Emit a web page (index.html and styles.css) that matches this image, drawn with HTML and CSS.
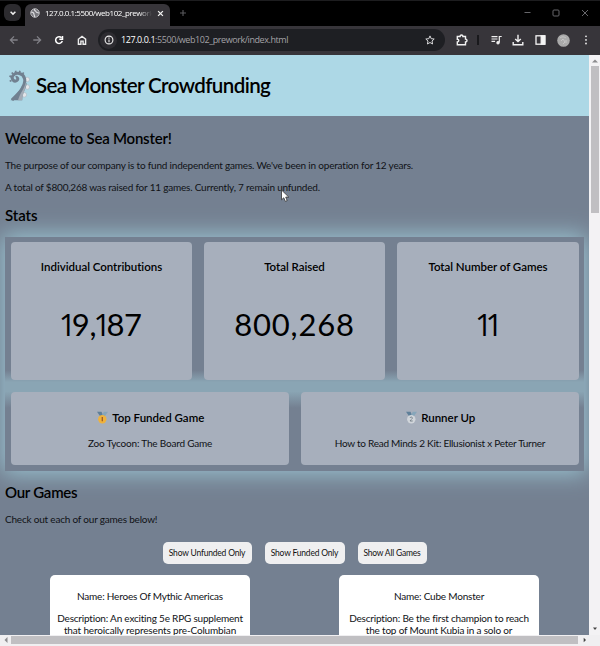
FILE: index.html
```html
<!DOCTYPE html>
<html lang="en">
<head>
<meta charset="utf-8">
<title>Sea Monster Crowdfunding</title>
<link rel="stylesheet" href="styles.css">
</head>
<body>
<div class="browser">
  <div class="tabstrip">
    <div class="tab-search"><svg width="8" height="8" viewBox="0 0 8 8" fill="none" stroke="#eee" stroke-width="1.5"><path d="M1.6 2.7 4 5.1 6.4 2.7"/></svg></div>
    <div class="tab">
      <svg width="10" height="10" viewBox="0 0 10 10"><circle cx="5" cy="5" r="4.3" fill="#77777d" stroke="#b5b5b9"/><path d="M1 4c2 0 3 1 3 2.2S5 8 4.6 9.2M4.3 1c-.3 2 1.2 1.4 1.7 2.6C6.5 5 8 4.5 9 5" fill="none" stroke="#e0e0e3" stroke-width="1.1"/></svg>
      <span class="tab-title">127.0.0.1:5500/web102_prework</span>
      <svg width="7" height="7" viewBox="0 0 7 7" stroke="#f1f1f1" stroke-width="1.3"><path d="m1.1 1.1 4.8 4.8m0-4.8L1.1 5.9"/></svg>
    </div>
    <svg class="new-tab" width="8" height="8" viewBox="0 0 8 8" stroke="#5b5b5f" stroke-width="1.1"><path d="M4 1v6M1 4h6"/></svg>
    <div class="window-buttons">
      <svg width="7" height="8" viewBox="0 0 7 8" fill="none" stroke="#66666a"><path d="M.5 3.500h6"/></svg>
      <svg width="8" height="8" viewBox="0 0 8 8" fill="none" stroke="#66666a"><rect x="1" y="1" width="6" height="6" rx="1"/></svg>
      <svg width="8" height="8" viewBox="0 0 8 8" fill="none" stroke="#66666a"><path d="m1 1 6 6m0-6L1 7"/></svg>
    </div>
  </div>
  <div class="toolbar">
    <div class="nav">
      <svg width="10" height="10" viewBox="0 0 10 10" fill="none" stroke="#818087" stroke-width="1.3"><path d="M8.7 5H1.6M5 1.4 1.4 5 5 8.6"/></svg>
      <svg width="10" height="10" viewBox="0 0 10 10" fill="none" stroke="#818087" stroke-width="1.3"><path d="M1.3 5h7.1M5 1.4 8.6 5 5 8.6"/></svg>
      <svg width="10" height="10" viewBox="0 0 10 10" fill="none" stroke="#fff" stroke-width="1.5"><path d="M8.300 6A3.400 3.400 0 1 1 7.600 2.800"/><path d="M8.500 1v3.200H5.300" /></svg>
      <svg width="10" height="10" viewBox="0 0 10 10" fill="none" stroke="#eee" stroke-width="1.4"><path d="M1.4 4.2 5 1.3l3.6 2.9v5H6.1V6.1H3.9v3.1H1.4z"/></svg>
    </div>
    <div class="address">
      <span class="info"><svg width="10" height="10" viewBox="0 0 10 10" fill="none" stroke="#eee" stroke-width="1.1"><circle cx="5" cy="5" r="3.9"/><path d="M5 4.5v2.8M5 2.6v1.1"/></svg></span>
      <span class="url"><b>127.0.0.1</b>:5500/web102_prework/index.html</span>
      <svg width="10" height="10" viewBox="0 0 10 10" fill="none" stroke="#d7d7d9"><path d="m5 .9 1.2 2.8 3 .3L7 6l.6 3L5 7.5 2.4 9 3 6 .8 4l3-.3z"/></svg>
    </div>
    <svg class="puzzle" width="12" height="12" viewBox="0 0 12 12" fill="none" stroke="#f1f1f1" stroke-width="1.4"><path d="M1.3 2.5h2.8c0-2 2.8-2 2.8 0h2.6v2.6c2 0 2 2.8 0 2.8v2.8H1.3V8c2 0 2-2.8 0-2.8z"/></svg>
    <span class="divider"></span>
    <svg class="queue" width="11" height="10" viewBox="0 0 11 10" fill="none" stroke="#f1f1f1" stroke-width="1.2"><path d="M.5 1.6h6M.5 4h6M.5 6.4h3.6M8.3 7.5v-6h2.4"/><circle cx="7" cy="7.7" r="1.1" fill="#f1f1f1"/></svg>
    <svg class="download" width="12" height="12" viewBox="0 0 12 12" fill="none" stroke="#f1f1f1" stroke-width="1.4"><path d="M6 .8v6.6M3.2 4.9 6 7.6l2.8-2.7M1.2 8v2.7h9.6V8"/></svg>
    <svg class="panel" width="11" height="10" viewBox="0 0 11 10" fill="none" stroke="#f5f5f5" stroke-width="1.3"><rect x="1" y=".8" width="8.8" height="8.4"/><path d="M6.2 1h3.6v8H6.2z" fill="#f5f5f5"/></svg>
    <svg class="avatar" width="13" height="13" viewBox="0 0 13 13"><circle cx="6.5" cy="6.5" r="6.3" fill="#aaa"/><path d="M3 4c2-2 5-1 6 0M4 7l2-2 2 3-2 2M9 6v3" fill="none" stroke="#ccc" stroke-width=".8"/></svg>
    <svg class="dots" width="4" height="10" viewBox="0 0 4 10" fill="#eee"><circle cx="2" cy="1.3" r=".9"/><circle cx="2" cy="4.9" r=".9"/><circle cx="2" cy="8.5" r=".9"/></svg>
  </div>
  <div class="viewport">
    <div class="page">
      <header class="header">
        <svg width="21" height="31" viewBox="0 0 21 31">
          <g fill="#e3e6ea" stroke="#b3bbc5" stroke-width=".7"><circle cx="18.300" cy="9.500" r="2.200"/><circle cx="18.300" cy="17" r="2.300"/><circle cx="15.200" cy="24.800" r="2.400"/></g>
          <path d="M3 30C9 24 17.500 16 15.500 8.500 14 3 7 2 4.500 5 1.500 8 4.500 12.500 7.800 10.500c1.800-1.200.8-3.700-1-3" fill="none" stroke="#718090" stroke-width="3"/>
          <path d="M1.500 30.200C8 24 12 19 13.500 15l4.200-2c-.7 7-4.700 9-4.500 17.200z" fill="#718090"/>
          <path d="M9 30.200C11 23 15.500 19 16.800 12c1 6-3 10-3.600 18.200z" fill="#a3acb7"/>
          <path d="M2.500 10.500.7 11.200M2.200 7 .5 5.800M4 4 2.800 2.400M7 2.500 6.500.8M10.500 2.500 11 .8M13.500 4l1.200-1.500" stroke="#718090" stroke-width="1.700"/>
        </svg>
        <h1>Sea Monster Crowdfunding</h1>
      </header>
      <main class="content">
        <h2>Welcome to Sea Monster!</h2>
        <p>The purpose of our company is to fund independent games. We've been in operation for 12 years.</p>
        <p>A total of $800,268 was raised for 11 games. Currently, 7 remain unfunded.</p>
        <h2 class="stats-title">Stats</h2>
        <section class="stats">
          <div class="row row-stats">
            <div class="card"><h3>Individual Contributions</h3><div class="number n-contrib"><i>1</i>9,<i>1</i>87</div></div>
            <div class="card"><h3>Total Raised</h3><div class="number">800,268</div></div>
            <div class="card"><h3>Total Number of Games</h3><div class="number"><i>1</i><i>1</i></div></div>
          </div>
          <div class="row row-top">
            <div class="card">
              <h3><svg width="13" height="13" viewBox="0 0 13 13"><path d="M1 .7h4.500l2 4.500-3 .6z" fill="#5e7f99"/><path d="M12 .7H7.800L5.500 5l3 .8z" fill="#86a6ba"/><circle cx="6.300" cy="8.300" r="4.200" fill="#efb23c"/><path d="M6.300 6v4.300" stroke="#9c5a28" stroke-width="1.300"/></svg>Top Funded Game</h3>
              <p>Zoo Tycoon: The Board Game</p>
            </div>
            <div class="card">
              <h3><svg width="13" height="13" viewBox="0 0 13 13"><path d="M1 .7h4.500l2 4.500-3 .6z" fill="#5e7f99"/><path d="M12 .7H7.800L5.500 5l3 .8z" fill="#86a6ba"/><circle cx="6.300" cy="8.300" r="4.200" fill="#d0d5da"/><path d="M5 7c.2-1.300 2.500-1.200 2.400.1C7.300 8 5.500 8.800 5.100 10h2.600" fill="none" stroke="#707a84" stroke-width=".9"/></svg>Runner Up</h3>
              <p class="runner">How to Read Minds 2 Kit: Ellusionist x Peter Turner</p>
            </div>
          </div>
        </section>
        <h2 class="games-title">Our Games</h2>
        <p>Check out each of our games below!</p>
        <div class="filters">
          <button class="f-unfunded">Show Unfunded Only</button>
          <button class="f-funded">Show Funded Only</button>
          <button class="f-all">Show All Games</button>
        </div>
        <div class="games">
          <article class="game"><p>Name: Heroes Of Mythic Americas</p><p class="desc">Description: An exciting 5e RPG supplement<br><span class="loose">that heroically represents pre-Columbian</span></p></article>
          <article class="game"><p>Name: Cube Monster</p><p class="desc">Description: Be the first champion to reach<br>the top of Mount Kubia in a solo or</p></article>
        </div>
      </main>
    </div>
    <div class="vscroll">
      <svg width="6" height="4" viewBox="0 0 6 4"><path d="m0 3.500 3-3 3 3z" fill="#8b8b8e"/></svg>
      <div class="vthumb"></div>
      <svg class="end" width="6" height="4" viewBox="0 0 6 4"><path d="m1 .5 2 2.500L5 .5z" fill="#444"/></svg>
    </div>
  </div>
  <div class="hscroll">
    <svg width="4" height="6" viewBox="0 0 4 6"><path d="M3.500 0v6L.5 3z" fill="#8b8b8e"/></svg>
    <div class="hthumb"></div>
    <svg class="end" width="4" height="6" viewBox="0 0 4 6"><path d="M.7.700v4.600L3 3z" fill="#444"/></svg>
  </div>
  <svg class="cursor" width="10" height="14" viewBox="0 0 10 14"><path d="M1.500 1v9.800l2.300-2 1.500 3.600 1.900-.8-1.500-3.500h3.100z" fill="#fff" stroke="#333" stroke-width=".8"/></svg>
</div>
</body>
</html>
```
FILE: styles.css
```css
* { box-sizing: border-box; }
body { margin: 0; font-family: Lato, sans-serif; color: #000; background: #f0eff1; }
h1, h2, h3, p { margin: 0; }
svg { display: block; flex: none; }
.browser { position: relative; width: 600px; height: 646px; overflow: hidden; display: flex; flex-direction: column; }

.tabstrip { height: 26px; flex: none; background: #000; border-top: 1px solid #1d1d1f; display: flex; align-items: flex-start; padding: 3px 11px 0 4px; }
.tab-search { width: 17px; height: 17px; border-radius: 6px; background: #2c2b2f; display: grid; place-items: center; }
.tab { width: 145px; height: 22px; margin-left: 4px; padding: 0 6px 4px 5px; border-radius: 6px 6px 0 0; background: #37353a; display: flex; align-items: center; gap: 5px; }
.tab-title { flex: 1; min-width: 0; overflow: hidden; white-space: nowrap; font: 8px/12px "Open Sans", sans-serif; letter-spacing: -.45px; color: #fff; -webkit-mask-image: linear-gradient(90deg, #000 88%, transparent); mask-image: linear-gradient(90deg, #000 88%, transparent); }
.new-tab { margin: 5px 0 0 9px; }
.window-buttons { margin: 5px 0 0 auto; display: flex; gap: 21px; }

.toolbar { height: 29px; flex: none; background: #37353a; display: flex; align-items: center; padding: 0 12px 1px 9px; }
.nav { display: flex; gap: 12.500px; margin-right: 11.500px; }
.address { width: 348px; height: 22px; border-radius: 11px; background: #1e1f23; display: flex; align-items: center; padding: 0 10px 0 2px; }
.info { width: 17px; height: 17px; border-radius: 50%; background: #2d2c31; display: grid; place-items: center; margin-right: 4px; }
.url { flex: 1; font: 9px/14px "Open Sans", sans-serif; letter-spacing: -.43px; color: #a3a2a6; white-space: nowrap; }
.url b { font-weight: 400; color: #fff; }
.puzzle { margin-left: 11px; }
.divider { width: 2px; height: 10px; background: #19191c; margin: 0 12px 0 9px; }
.download { margin-left: 10.500px; }
.panel { margin-left: 11px; }
.avatar { margin-left: 11px; }
.dots { margin-left: 14px; }

.viewport { height: 580px; flex: none; display: flex; }
.page { width: 589px; height: 580px; overflow: hidden; background: #748091; }
.header { height: 61px; background: #add8e6; display: flex; align-items: center; padding: 0 9px 1px; gap: 6px; }
.header h1 { font-size: 20.500px; font-weight: 600; letter-spacing: -.58px; line-height: 28px; }
.content { padding: 12px 5px 0; }
h2 { font-size: 15px; font-weight: 600; line-height: 20px; letter-spacing: -.22px; }
p { font-size: 10px; line-height: 12px; letter-spacing: -.2px; color: #101216; white-space: nowrap; }
.content > p { margin-top: 10px; }
.content > h2 + p { margin-top: 11px; }
.content > .stats-title { margin-top: 12px; letter-spacing: -.05px; }
.stats { margin: 12px 0 11px; background: #748091 linear-gradient(transparent 57%, #8aa5b4 62%, #8aa5b4 66%, transparent 73%); box-shadow: 0 0 22px 2px #9cc6d4; padding: 5px 5px 6px 6px; display: flex; flex-direction: column; gap: 12px; }
.row { display: grid; column-gap: 12px; }
.row-stats { grid-template-columns: 181px 181px 182px; height: 138px; }
.row-top { grid-template-columns: repeat(2, 1fr); height: 73px; }
.card { background: #a7afbc; border-radius: 4px; display: flex; flex-direction: column; align-items: center; padding-top: 17px; }
.card h3 { font-size: 11.500px; font-weight: 600; line-height: 15px; letter-spacing: -.03px; display: flex; align-items: center; gap: 3.500px; }
.number { font-size: 31px; line-height: 38px; margin-top: 31px; letter-spacing: .8px; display: flex; }
.number i { font: 400 30.500px/38px "Open Sans", sans-serif; width: 10.500px; text-indent: -2.500px; letter-spacing: 0; }
.n-contrib { letter-spacing: -.4px; }
.row-top .card { padding-top: 18px; }
.row-top h3 { letter-spacing: 0; }
.row-top p { margin-top: 12px; }
.row-top .runner { letter-spacing: -.26px; }
.games-title { letter-spacing: -.27px; }
.filters { display: flex; justify-content: center; gap: 13px; margin-top: 17px; }
.filters button { height: 22px; border: 0; border-radius: 5px; background: #efeff0; color: #111; font: 8.500px/12px Lato, sans-serif; padding: 0 0 1px; letter-spacing: -.2px; }
.filters .f-unfunded { width: 89px; }
.filters .f-funded { width: 80px; }
.filters .f-all { width: 69px; }
.games { display: flex; margin-top: 11px; padding: 0 45px; justify-content: space-between; }
.game { width: 200px; height: 80px; background: #fff; border-radius: 5px; text-align: center; padding-top: 15px; }
.game .desc { margin-top: 10px; }
.loose { letter-spacing: -.15px; }

.vscroll { width: 11px; background: #f3f2f4; display: flex; flex-direction: column; align-items: center; padding-top: 4px; }
.vthumb { width: 8px; height: 147px; margin-top: 3px; background: #c0bfc2; }
.vscroll .end { margin: auto 0 4px; }
.hscroll { height: 11px; background: #f0eff1; display: flex; align-items: center; padding: 0 13px 1px 4px; }
.hthumb { width: 267px; flex: 1; height: 8px; margin: 0 5px 0 3px; background: #c0bfc2; }
.cursor { position: absolute; left: 280px; top: 189px; }
```
